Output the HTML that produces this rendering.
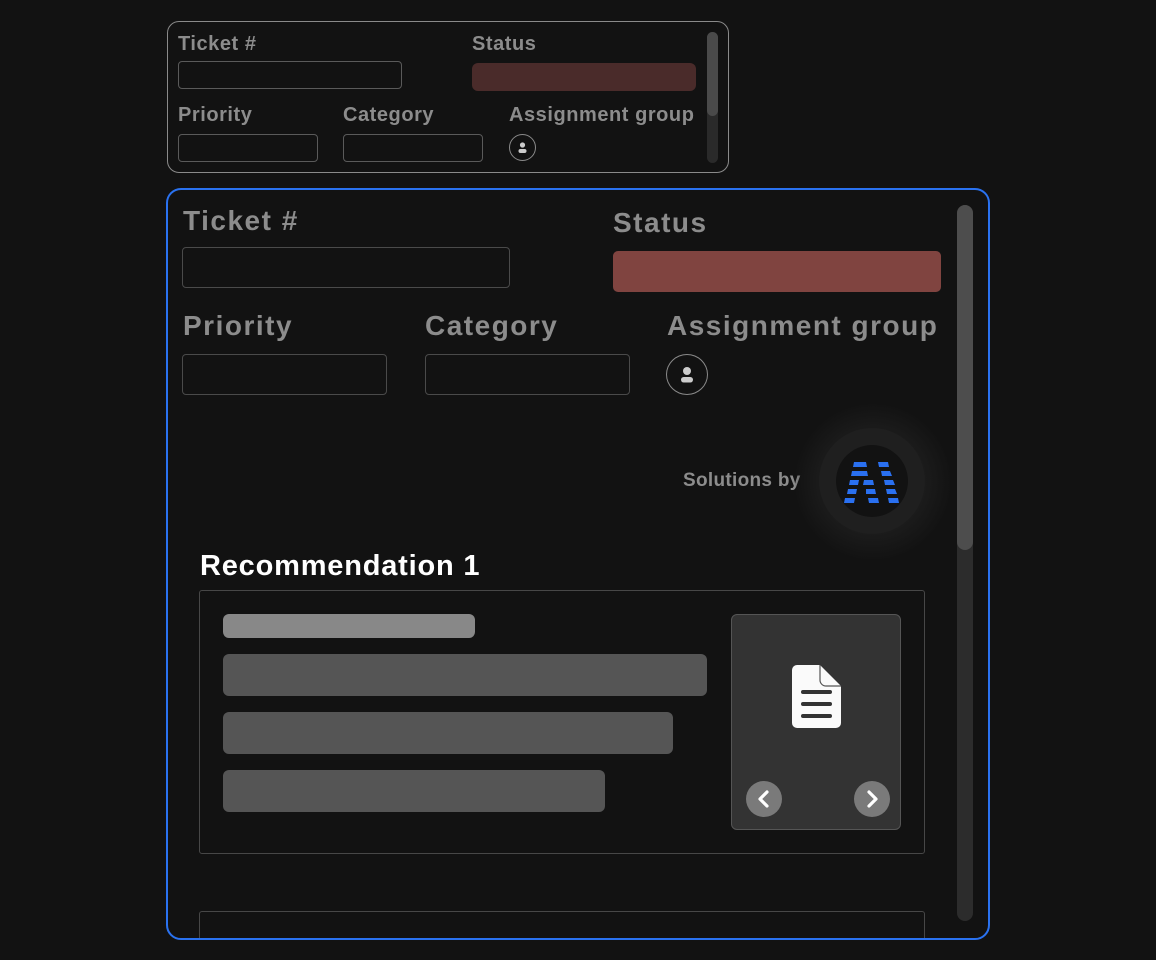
<!DOCTYPE html>
<html><head><meta charset="utf-8"><style>
*{box-sizing:border-box;margin:0;padding:0}
body{width:1156px;height:960px;background:#121212;position:relative;overflow:hidden;font-family:"Liberation Sans",sans-serif}
.a{position:absolute}
.lbl{position:absolute;color:#8c8c8c;font-weight:bold;white-space:nowrap}
.s{letter-spacing:0.55px}
.b{letter-spacing:1.5px}
.inp{position:absolute;border:1px solid #4a4a4a;border-radius:4px}
.av{position:absolute;border:1px solid #8a8a8a;border-radius:50%}
</style></head><body>
<!-- small card -->
<div class="a" style="left:167px;top:21px;width:562px;height:152px;border:1.5px solid #8a8a8a;border-radius:12px"></div>
<div class="lbl s" style="left:178px;top:33px;font-size:20px">Ticket #</div>
<div class="inp" style="left:178px;top:61px;width:224px;height:28px;border-color:#5a5a5a"></div>
<div class="lbl s" style="left:472px;top:33px;font-size:20px">Status</div>
<div class="a" style="left:472px;top:63px;width:224px;height:28px;background:#4a2b2a;border-radius:6px"></div>
<div class="lbl s" style="left:178px;top:104px;font-size:20px">Priority</div>
<div class="inp" style="left:178px;top:134px;width:140px;height:28px;border-color:#5a5a5a"></div>
<div class="lbl s" style="left:343px;top:104px;font-size:20px">Category</div>
<div class="inp" style="left:343px;top:134px;width:140px;height:28px;border-color:#5a5a5a"></div>
<div class="lbl s" style="left:509px;top:104px;font-size:20px">Assignment group</div>
<div class="av" style="left:509px;top:134px;width:27px;height:27px">
<svg width="25" height="25" viewBox="0 0 25 25"><circle cx="12.5" cy="10" r="2.6" fill="#ccc"/><rect x="8.5" y="14" width="8" height="4" rx="2" fill="#ccc"/></svg></div>
<div class="a" style="left:707px;top:32px;width:11px;height:131px;background:#2a2a2a;border-radius:6px"></div>
<div class="a" style="left:707px;top:32px;width:11px;height:84px;background:#4a4a4a;border-radius:6px"></div>

<!-- big card -->
<div class="a" style="left:166px;top:188px;width:824px;height:752px;border:2px solid #2a72f0;border-radius:15px"></div>
<div class="lbl b" style="left:183px;top:205px;font-size:28px">Ticket #</div>
<div class="inp" style="left:182px;top:247px;width:328px;height:41px"></div>
<div class="lbl b" style="left:613px;top:207px;font-size:28px">Status</div>
<div class="a" style="left:613px;top:251px;width:328px;height:41px;background:#804440;border-radius:5px"></div>
<div class="lbl b" style="left:183px;top:310px;font-size:28px">Priority</div>
<div class="inp" style="left:182px;top:354px;width:205px;height:41px"></div>
<div class="lbl b" style="left:425px;top:310px;font-size:28px">Category</div>
<div class="inp" style="left:425px;top:354px;width:205px;height:41px"></div>
<div class="lbl b" style="left:667px;top:310px;font-size:28px">Assignment group</div>
<div class="av" style="left:666px;top:354px;width:42px;height:41px">
<svg width="40" height="39" viewBox="0 0 40 39"><circle cx="20" cy="16" r="4" fill="#ccc"/><rect x="14" y="22" width="12" height="5.5" rx="2.7" fill="#ccc"/></svg></div>
<div class="a" style="left:957px;top:205px;width:16px;height:716px;background:#2c2c2c;border-radius:8px"></div>
<div class="a" style="left:957px;top:205px;width:16px;height:345px;background:#4d4d4d;border-radius:8px"></div>

<div class="a" style="left:683px;top:470px;font-size:19px;color:#8c8c8c;font-weight:bold;letter-spacing:0.3px">Solutions by</div>
<div class="a" style="left:795px;top:404px;width:156px;height:156px;border-radius:50%;background:radial-gradient(circle,#1e1e1e 0,#1c1c1c 45%,rgba(26,26,26,0) 72%)"></div>
<div class="a" style="left:819px;top:428px;width:106px;height:106px;border-radius:50%;background:#1f1f1f"></div>
<div class="a" style="left:836px;top:445px;width:72px;height:72px;border-radius:50%;background:#121212"></div>
<svg class="a" style="left:840px;top:458px" width="64" height="46" viewBox="0 0 64 46">
<g fill="#2a70f0">
<polygon points="14,4 26,4 27,9 13,9"/><polygon points="38,4 48,4 49,9 39,9"/>
<polygon points="12,13 27,13 28,18 11,18"/><polygon points="41,13 50,13 52,18 42,18"/>
<polygon points="10,22 19,22 18,27 9,27"/><polygon points="24,22 33,22 34,27 23,27"/><polygon points="44,22 53,22 55,27 45,27"/>
<polygon points="8,31 17,31 16,36 7,36"/><polygon points="26,31 35,31 36,36 26,36"/><polygon points="46,31 55,31 57,36 47,36"/>
<polygon points="5,40 15,40 14,45 4,45"/><polygon points="28,40 38,40 39,45 29,45"/><polygon points="48,40 58,40 59,45 49,45"/>
</g></svg>

<div class="a" style="left:200px;top:550px;font-size:29px;color:#fff;font-weight:bold;letter-spacing:0.8px">Recommendation 1</div>
<div class="a" style="left:199px;top:590px;width:726px;height:264px;border:1px solid #474747;border-radius:3px"></div>
<div class="a" style="left:223px;top:614px;width:252px;height:24px;background:#888;border-radius:6px"></div>
<div class="a" style="left:223px;top:654px;width:484px;height:42px;background:#555;border-radius:6px"></div>
<div class="a" style="left:223px;top:712px;width:450px;height:42px;background:#555;border-radius:6px"></div>
<div class="a" style="left:223px;top:770px;width:382px;height:42px;background:#555;border-radius:6px"></div>
<div class="a" style="left:731px;top:614px;width:170px;height:216px;background:#333;border:1.5px solid #555;border-radius:6px"></div>
<svg class="a" style="left:792px;top:665px" width="49" height="63" viewBox="0 0 49 63">
<path d="M5 0H28L49 21V58a5 5 0 0 1-5 5H5a5 5 0 0 1-5-5V5a5 5 0 0 1 5-5z" fill="#fafafa"/>
<path d="M28 0V15a6 6 0 0 0 6 6H49" fill="none" stroke="#555" stroke-width="1.2"/>
<rect x="9" y="25" width="31" height="4" rx="2" fill="#333"/><rect x="9" y="37" width="31" height="4" rx="2" fill="#333"/><rect x="9" y="49" width="31" height="4" rx="2" fill="#333"/>
</svg>
<svg class="a" style="left:746px;top:781px" width="36" height="36" viewBox="0 0 36 36"><circle cx="18" cy="18" r="18" fill="#7a7a7a"/><path d="M21 11l-7 7 7 7" fill="none" stroke="#fff" stroke-width="3.2" stroke-linecap="round" stroke-linejoin="round"/></svg>
<svg class="a" style="left:854px;top:781px" width="36" height="36" viewBox="0 0 36 36"><circle cx="18" cy="18" r="18" fill="#7a7a7a"/><path d="M15 11l7 7-7 7" fill="none" stroke="#fff" stroke-width="3.2" stroke-linecap="round" stroke-linejoin="round"/></svg>

<div class="a" style="left:199px;top:911px;width:726px;height:27px;border:1px solid #474747;border-bottom:none;border-radius:3px 3px 0 0"></div>
</body></html>
